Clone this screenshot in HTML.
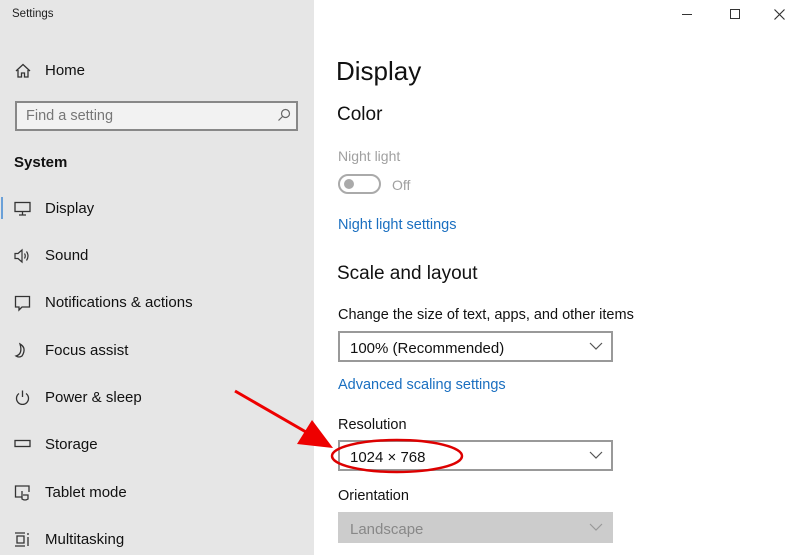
<!DOCTYPE html>
<html><head><meta charset="utf-8"><style>
*{margin:0;padding:0;box-sizing:border-box}
body{width:800px;height:555px;overflow:hidden;background:#fff;font-family:"Liberation Sans",sans-serif;position:relative;color:#111}
.side{position:absolute;left:0;top:0;width:314px;height:555px;background:#e6e6e6}
.t{position:absolute;white-space:nowrap;line-height:1}
.nav{font-size:15px;left:45px}
.ic{position:absolute;left:14px}
.dd{position:absolute;left:338px;width:275px;height:31px;border:2px solid #999;background:#fff;font-size:15px;padding:7px 0 0 10px}
.dd svg{position:absolute;right:8px;top:8px}
</style></head><body>
<div class="side"></div>
<div class="t" style="left:12px;top:9px;font-size:11.5px;color:#222">Settings</div>
<svg class="ic" style="top:62px" width="18" height="18" viewBox="0 0 18 18" fill="none" stroke="#333" stroke-width="1.3"><path d="M2 9 L9 2.5 L16 9 M4 8 V15 H7.5 V11 H10.5 V15 H14 V8"/></svg>
<div class="t nav" style="top:63px">Home</div>
<div style="position:absolute;left:15px;top:101px;width:283px;height:30px;border:2px solid #888;background:#f2f2f2"></div>
<div class="t" style="left:26px;top:109px;font-size:14.5px;color:#777">Find a setting</div>
<svg style="position:absolute;left:277px;top:108px" width="14" height="14" viewBox="0 0 14 14" fill="none" stroke="#666" stroke-width="1.2"><circle cx="8.5" cy="5.5" r="4"/><path d="M5.5 8.5 L1.5 12.5"/></svg>
<div class="t" style="left:14px;top:155px;font-size:15px;font-weight:bold">System</div>
<div style="position:absolute;left:1px;top:197px;width:2px;height:22px;background:#6aa0d8"></div>
<svg class="ic" style="top:201px" width="18" height="16" viewBox="0 0 18 16" fill="none" stroke="#333" stroke-width="1.3"><rect x="1" y="1.5" width="15" height="9"/><path d="M8.5 10.5V14M5 14H12"/></svg>
<div class="t nav" style="top:201px">Display</div>
<svg class="ic" style="top:248px" width="18" height="16" viewBox="0 0 18 16" fill="none" stroke="#333" stroke-width="1.2"><path d="M1 5.5H4L8 2V14L4 10.5H1Z M10.5 5.5Q12 8 10.5 10.5 M12.5 3.5Q15.5 8 12.5 12.5"/></svg>
<div class="t nav" style="top:248px">Sound</div>
<svg class="ic" style="top:295px" width="18" height="17" viewBox="0 0 18 17" fill="none" stroke="#333" stroke-width="1.3"><path d="M1.5 1.5H15.5V12H8L5 15V12H1.5Z"/></svg>
<div class="t nav" style="top:295px">Notifications &amp; actions</div>
<svg class="ic" style="top:342px" width="18" height="18" viewBox="0 0 18 18" fill="none" stroke="#333" stroke-width="1.3"><path d="M6 2Q13 6 8 14Q5 16 2 14Q9 12 6 2Z"/></svg>
<div class="t nav" style="top:343px">Focus assist</div>
<svg class="ic" style="top:389px" width="18" height="18" viewBox="0 0 18 18" fill="none" stroke="#333" stroke-width="1.3"><path d="M5 4.5A6 6 0 1 0 12 4.5M8.5 1.5V8"/></svg>
<div class="t nav" style="top:390px">Power &amp; sleep</div>
<svg class="ic" style="top:438px" width="18" height="12" viewBox="0 0 18 12" fill="none" stroke="#333" stroke-width="1.3"><rect x="1" y="2.5" width="15" height="6"/></svg>
<div class="t nav" style="top:437px">Storage</div>
<svg class="ic" style="top:484px" width="18" height="18" viewBox="0 0 18 18" fill="none" stroke="#333" stroke-width="1.3"><path d="M8 13H1.5V2H15V8 M8 7V15Q11 17 14 15V11H9"/></svg>
<div class="t nav" style="top:485px">Tablet mode</div>
<svg class="ic" style="top:531px" width="18" height="18" viewBox="0 0 18 18" fill="none" stroke="#333" stroke-width="1.3"><path d="M1 2H11M1 15H11M3 5H10V12H3Z M14 2V4M14 6V15"/></svg>
<div class="t nav" style="top:532px">Multitasking</div>

<div style="position:absolute;left:682px;top:14px;width:10px;height:1px;background:#333"></div>
<div style="position:absolute;left:730px;top:9px;width:10px;height:10px;border:1px solid #333"></div>
<svg style="position:absolute;left:774px;top:9px" width="11" height="11" viewBox="0 0 11 11" stroke="#333" stroke-width="1.2"><path d="M0.5 0.5L10.5 10.5M10.5 0.5L0.5 10.5"/></svg>

<div class="t" style="left:336px;top:58px;font-size:26px;color:#111">Display</div>
<div class="t" style="left:337px;top:105px;font-size:19px">Color</div>
<div class="t" style="left:338px;top:149px;font-size:14px;color:#a0a0a0">Night light</div>
<div style="position:absolute;left:338px;top:174px;width:43px;height:20px;border:2px solid #aaa;border-radius:10px"></div>
<div style="position:absolute;left:344px;top:179px;width:10px;height:10px;border-radius:5px;background:#aaa"></div>
<div class="t" style="left:392px;top:178px;font-size:14px;color:#a0a0a0">Off</div>
<div class="t" style="left:338px;top:218px;font-size:14.5px;color:#1a6fc0">Night light settings</div>
<div class="t" style="left:337px;top:264px;font-size:19px">Scale and layout</div>
<div class="t" style="left:338px;top:308px;font-size:14.5px">Change the size of text, apps, and other items</div>
<div class="dd" style="top:331px">100% (Recommended)<svg width="14" height="10" viewBox="0 0 14 10" fill="none" stroke="#555" stroke-width="1.2"><path d="M1 2L7 8L13 2"/></svg></div>
<div class="t" style="left:338px;top:378px;font-size:14.5px;color:#1a6fc0">Advanced scaling settings</div>
<div class="t" style="left:338px;top:418px;font-size:14.5px">Resolution</div>
<div class="dd" style="top:440px">1024 × 768<svg width="14" height="10" viewBox="0 0 14 10" fill="none" stroke="#555" stroke-width="1.2"><path d="M1 2L7 8L13 2"/></svg></div>
<div class="t" style="left:338px;top:489px;font-size:14.5px">Orientation</div>
<div class="dd" style="top:512px;background:#ccc;border-color:#ccc;color:#888">Landscape<svg width="14" height="10" viewBox="0 0 14 10" fill="none" stroke="#999" stroke-width="1.2"><path d="M1 2L7 8L13 2"/></svg></div>

<svg style="position:absolute;left:0;top:0" width="800" height="555">
<line x1="235" y1="391" x2="306" y2="432" stroke="#e00" stroke-width="3"/>
<polygon points="333,448 297,444 312,420" fill="#e00"/>
<ellipse cx="397" cy="456" rx="65" ry="16" fill="none" stroke="#d00" stroke-width="2.5"/>
</svg>
</body></html>
